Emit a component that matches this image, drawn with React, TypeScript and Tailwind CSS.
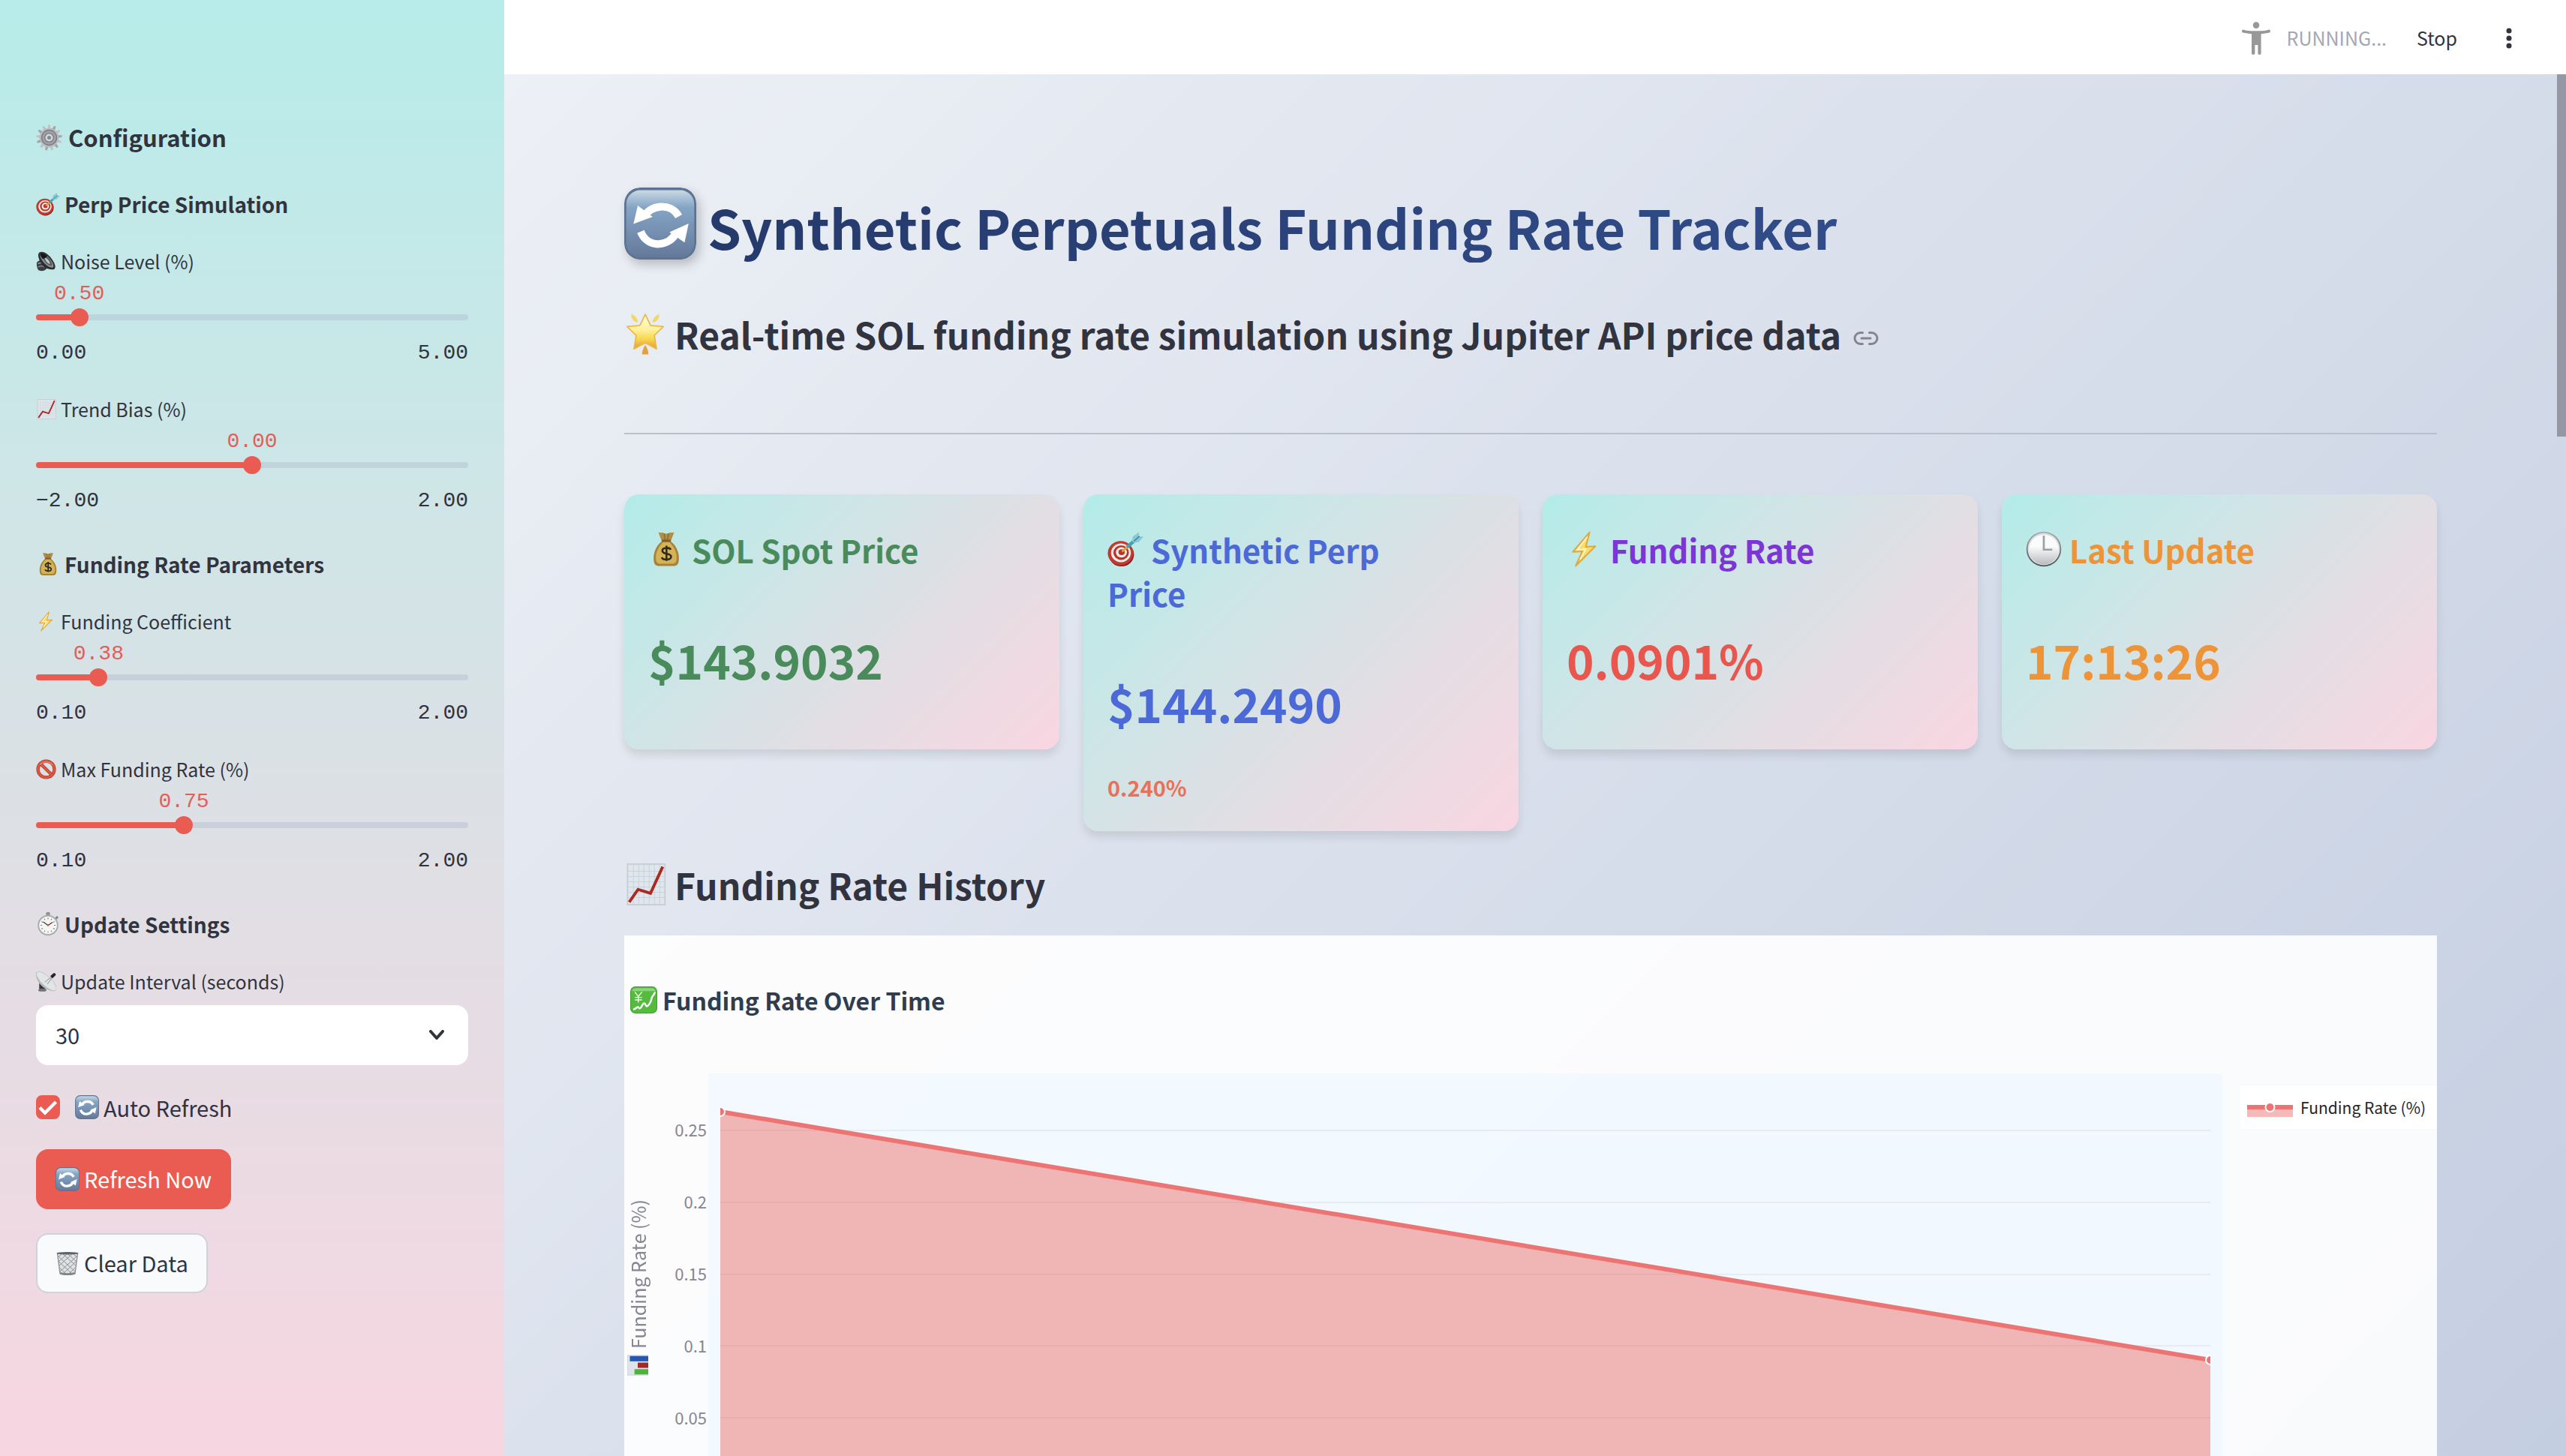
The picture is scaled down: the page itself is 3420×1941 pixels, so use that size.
import { useState, type ReactNode } from "react";
import { Link2 } from "lucide-react";

type IconProps = { className?: string };

function Svg({ className = "", children }: IconProps & { children: ReactNode }) {
  return (
    <svg viewBox="0 0 32 32" aria-hidden="true" className={`shrink-0 ${className}`}>
      {children}
    </svg>
  );
}

function GearIcon({ className }: IconProps) {
  return (
    <Svg className={className}>
      {Array.from({ length: 13 }, (_, i) => (
        <path key={i} d="M14.900 0.300h2.200l1 5.700h-4.200z" fill={i % 2 ? "#a3a5aa" : "#c0c2c6"} transform={`rotate(${(i * 360) / 13} 16 16)`} />
      ))}
      <circle cx="16" cy="16" r="11.600" fill="#b9bbc0" />
      <circle cx="16" cy="16" r="9.800" fill="#7d7f84" />
      <circle cx="16" cy="16" r="8.400" fill="#a0a2a7" />
      <circle cx="16" cy="16" r="6" fill="#808287" />
      <circle cx="16" cy="16" r="4.600" fill="#d6d8db" />
      <circle cx="16" cy="16" r="2.300" fill="#7b8a8c" />
    </Svg>
  );
}

function DartIcon({ className }: IconProps) {
  return (
    <Svg className={className}>
      <ellipse cx="12.400" cy="20.800" rx="11.200" ry="10.600" fill="#7d1f17" />
      <ellipse cx="11.700" cy="19.600" rx="11.400" ry="10.800" fill="#c4392d" />
      <ellipse cx="12" cy="19.300" rx="8.800" ry="8.300" fill="#f3ece8" />
      <ellipse cx="12.200" cy="19.100" rx="6.900" ry="6.500" fill="#b8352b" />
      <ellipse cx="12.400" cy="18.900" rx="4.900" ry="4.600" fill="#f3ece8" />
      <ellipse cx="12.600" cy="18.700" rx="2.800" ry="2.600" fill="#b8352b" />
      <path d="M13 18.300 18.500 13.500" stroke="#d9a63c" strokeWidth="2" />
      <path d="M17.500 14.300 24.500 8" stroke="#4aa0b3" strokeWidth="3" />
      <path d="M22 9.500 22.500 5 28 1 28 4.600 32 5 27.800 9.600 24.200 10.400z" fill="#85c9d6" />
      <path d="M23.500 9 28.500 4.500" stroke="#3b8397" strokeWidth="1" />
    </Svg>
  );
}

function SpeakerIcon({ className }: IconProps) {
  return (
    <Svg className={className}>
      <path d="M1 19c0-3 6-6 9-5l8 12c-3 5-10 6-14 4-2-2-3-7-3-11z" fill="#3a3d41" />
      <path d="M3 20c3-2 6-2 8 0M3.500 25c3-2 7-2 9.500 0" stroke="#9a9ea1" strokeWidth="1.500" fill="none" />
      <path d="M5 2C10-1 18 3 24 11c6 8 8 14 5 17-4 2-12 0-17-4C6 18 1 6 5 2z" fill="#2b2e32" />
      <path d="M7 3.500c5-1 11 3 15 8.500 5 6 6.500 11 5 13.500-4 1-9-2-13-6C9 14.500 4.500 6.500 7 3.500z" fill="#8e9498" />
      <path d="M10 6c5 0 9 3 12 7 3 4.500 4 8 3 10-4 0-7-2-10-5.500C12 14 9 9 10 6z" fill="#565b60" />
      <path d="M14 10c4 1 8 6 8 10-3 0-8-6-8-10z" fill="#c3c8cb" />
      <path d="M7 3.500c4-1 8 1 11 4-2 3-5 3-7 5-3-3-5-7-4-9z" fill="#16181b" />
    </Svg>
  );
}

function ChartUpIcon({ className }: IconProps) {
  return (
    <Svg className={className}>
      <rect x="2.500" y="0.500" width="28.500" height="31" fill="#dfe6ec" stroke="#c5ccd3" />
      {[6, 10, 14, 18, 22, 26].map((v) => (
        <path key={v} d={`M3 ${v}H31M${v + 1} 1V31`} stroke="#c7d1db" strokeWidth="0.500" />
      ))}
      <path d="M3.800 29.500 10.500 19.800 20 22.800 29.300 2.500" fill="none" stroke="#a92a20" strokeWidth="2.200" />
    </Svg>
  );
}

function MoneyBagIcon({ className }: IconProps) {
  return (
    <Svg className={className}>
      <path d="M9 1c2 1 3 0 4 .5 2 1 4 1 6 0 1-.5 2 .5 4-.5l-3 8h-8z" fill="#b18d45" />
      <path d="M12 9h8c6 5 8 12 7 18-.5 3-2 4-5 4H10c-3 0-4.500-1-5-4-1-6 1-13 7-18z" fill="#a9823a" />
      <path d="M13 10h6c5 5 7 11 6 16-.4 2.500-2 3-4 3H11c-2 0-3.600-.5-4-3-1-5 1-11 6-16z" fill="#d3b355" />
      <path d="M12 8.500h8" stroke="#80602a" strokeWidth="1.800" />
      <path d="M14 2l1 6M18 2l-1 6" stroke="#80602a" strokeWidth="0.700" />
      <path d="M20 16.500c-1-2-7.500-2.500-7.500 1 0 3.800 7.800 1.600 7.800 5.200 0 3.600-7.300 3.200-8.300.6M16.200 13v13.500" fill="none" stroke="#2e2a1c" strokeWidth="1.700" />
    </Svg>
  );
}

function BoltIcon({ className }: IconProps) {
  return (
    <Svg className={className}>
      <path d="M20.500 1 5.500 18.500l8.500-.5L8 31 25.500 13.500 17 14z" fill="#f9dc6c" stroke="#dfa941" strokeWidth="1.300" strokeLinejoin="round" />
      <path d="M18.500 5 9.500 16.500 17 16l-5 9" fill="none" stroke="#fff6c4" strokeWidth="1.200" />
    </Svg>
  );
}

function ProhibitedIcon({ className }: IconProps) {
  return (
    <Svg className={className}>
      <circle cx="16" cy="16" r="13" fill="none" stroke="#a33424" strokeWidth="5" />
      <circle cx="16" cy="16" r="13" fill="none" stroke="#da5740" strokeWidth="3.600" />
      <path d="M7 7 25 25" stroke="#a33424" strokeWidth="5" />
      <path d="M6.500 6.500 25.500 25.500" stroke="#da5740" strokeWidth="3.600" />
      <path d="M6 9A13 13 0 0 1 26 9" fill="none" stroke="#f09a86" strokeWidth="1.200" />
    </Svg>
  );
}

function StopwatchIcon({ className }: IconProps) {
  return (
    <Svg className={className}>
      <rect x="13.300" y="0" width="5.400" height="4.500" rx="1.500" fill="#8d9296" />
      <path d="M26 9l3-3" stroke="#7e8488" strokeWidth="3" />
      <circle cx="16" cy="17.500" r="13.800" fill="#a9adb0" />
      <circle cx="16" cy="17.500" r="11.800" fill="#f5f5f4" />
      {Array.from({ length: 12 }, (_, i) => (
        <path key={i} d="M16 7.500v2" stroke="#777" strokeWidth="1" transform={`rotate(${i * 30} 16 17.500)`} />
      ))}
      <path d="M16 17.500 9.500 13M16 17.500l6-4" stroke="#333" strokeWidth="1.100" />
      <circle cx="16" cy="17.500" r="1.200" fill="#b3564c" />
    </Svg>
  );
}

function SatelliteIcon({ className }: IconProps) {
  return (
    <Svg className={className}>
      <path d="M5 19h8l2 9H5z" fill="#34383b" />
      <ellipse cx="10" cy="29.500" rx="6.500" ry="2.300" fill="#6e7376" />
      <path d="M0.500 1C-2 15 12 32 31 30.500z" fill="#b4b7b9" />
      <ellipse cx="16.500" cy="15.500" rx="20.500" ry="7.500" transform="rotate(43 16.500 15.500)" fill="#e3e5e5" stroke="#b5b8b9" strokeWidth="0.800" />
      <path d="M14 17 25 8M18 20l8-11" stroke="#85898b" strokeWidth="1.100" />
      <path d="M22.500 7.500 27.500 3c2-1.200 4.500 1 3.500 3l-5 5z" fill="#24272a" />
    </Svg>
  );
}

function RefreshEmoji({ className }: IconProps) {
  return (
    <Svg className={className}>
      <defs>
        <linearGradient id="refreshFace" x1="0" y1="0" x2="0" y2="1">
          <stop offset="0" stopColor="#c9d8e4" />
          <stop offset="0.250" stopColor="#86a5c6" />
          <stop offset="1" stopColor="#64799a" />
        </linearGradient>
      </defs>
      <rect width="32" height="32" rx="7" fill="#5d7391" />
      <rect x="0.900" y="1.200" width="30.200" height="29.900" rx="6.200" fill="url(#refreshFace)" />
      <path d="M9.200 12.500C11.500 8 20.500 6.300 24.200 12.800" fill="none" stroke="#fff" strokeWidth="3.400" />
      <path d="M4.100 16.200 6 8l6.600 5z" fill="#fff" />
      <path d="M22.800 20.500C20.500 25.500 10.800 28 7.300 19.600" fill="none" stroke="#fff" strokeWidth="3.400" />
      <path d="M28.600 16 26.800 24.400 20.100 19.800z" fill="#fff" />
    </Svg>
  );
}

function TrashIcon({ className }: IconProps) {
  return (
    <Svg className={className}>
      <path d="M2.500 3h27L26 30c-4 2-16 2-20 0z" fill="#dfe1e3" />
      <path
        d="M4 7l22 20M4.500 14 22 30M5.500 22l8 8M10 4l17 15M17 4l11 10M24 4l5 4M28 7 6 27M27 14 10 30M26 22l-8 8M22 4 5 19M15 4 4 14M8 4 3.500 8"
        stroke="#8d9195"
        strokeWidth="1"
      />
      <path d="M2.500 3 6 30c4 2 16 2 20 0L29.500 3" fill="none" stroke="#8a8e92" strokeWidth="1.300" />
      <ellipse cx="16" cy="2.800" rx="14.500" ry="1.700" fill="#5f6468" />
      <path d="M6.200 29c5 2 15 2 19.600 0" fill="none" stroke="#7f8487" strokeWidth="2.400" />
    </Svg>
  );
}

function StarIcon({ className }: IconProps) {
  return (
    <Svg className={className}>
      <defs>
        <linearGradient id="starFace" x1="0" y1="0" x2="0" y2="1">
          <stop offset="0" stopColor="#fffbe0" />
          <stop offset="0.450" stopColor="#fdf19a" />
          <stop offset="0.700" stopColor="#f9d84f" />
          <stop offset="1" stopColor="#e59a35" />
        </linearGradient>
      </defs>
      <path d="M16 1.200 20.100 9.600 29.800 10.500 22.900 17.200 24.600 27.600 16 22.800 7.400 27.600 9.100 17.200 2.200 10.500 11.900 9.600z" fill="url(#starFace)" stroke="#eab94c" strokeWidth="1" strokeLinejoin="round" />
      <path d="M5.500 1c3 1 5 4 5 6.500C7 7 5 4 5.500 1zM26.500 1c-3 1-5 4-5 6.500C25 7 27 4 26.500 1z" fill="#f3d767" />
      <path d="M16 24.500c1.500 2 2.500 5 2.500 7.200h-5c0-2.200 1-5.200 2.500-7.200z" fill="#e5a03d" />
    </Svg>
  );
}

function ClockIcon({ className }: IconProps) {
  return (
    <Svg className={className}>
      <defs>
        <linearGradient id="clockRim" x1="0" y1="0" x2="0" y2="1">
          <stop offset="0" stopColor="#a9aeb2" />
          <stop offset="1" stopColor="#4d5053" />
        </linearGradient>
        <linearGradient id="clockFace" x1="0" y1="0" x2="0" y2="1">
          <stop offset="0.400" stopColor="#fbfbfb" />
          <stop offset="1" stopColor="#b9bcc0" />
        </linearGradient>
      </defs>
      <circle cx="16" cy="16" r="15.500" fill="url(#clockRim)" />
      <circle cx="16" cy="16" r="14.300" fill="#dcdfe1" />
      <circle cx="16" cy="16.400" r="13.200" fill="url(#clockFace)" />
      <path d="M16 4v12.500h7.500" fill="none" stroke="#9da1a5" strokeWidth="1.800" />
    </Svg>
  );
}

function YenChartIcon({ className }: IconProps) {
  return (
    <Svg className={className}>
      <rect width="32" height="32" rx="6" fill="#459f35" />
      <rect x="1" y="1" width="30" height="30" rx="5" fill="#55bb3e" />
      <path d="M2 5.500Q3 2 7 2h18q4 0 5 3.500z" fill="#8cd47b" />
      <path d="M5.500 6.500 9.500 12l4.500-5.500M9.500 12v7M5.500 13h8.500M5.500 16h8.500" fill="none" stroke="#e9f8e3" strokeWidth="1.300" />
      <path d="M4.500 27c2-.5 3-2.500 4.500-2.500 1 0 1 2 2.500 1.500 2-1 3-6 5-6s1.500 3.500 3 3.500 3-2 4.500-5 1-6 2.500-7 2-3 2.500-4" fill="none" stroke="#fff" strokeWidth="2.200" strokeLinecap="round" strokeLinejoin="round" />
    </Svg>
  );
}

function BarChartIcon({ className }: IconProps) {
  return (
    <Svg className={className}>
      <rect x="1" y="0" width="30" height="32" fill="#dde4ea" stroke="#c6cdd4" />
      <rect x="2" y="11" width="8" height="21" fill="#4eb33b" />
      <rect x="12" y="16" width="8" height="16" fill="#a12a22" />
      <rect x="22" y="4" width="8" height="28" fill="#2557b0" />
    </Svg>
  );
}

function PersonIcon() {
  return (
    <svg viewBox="0 0 38 44" className="h-11 w-[38px]" aria-hidden="true" fill="#989898">
      <circle cx="19" cy="4.600" r="4.300" />
      <path d="M2 10.500C7 12.400 13 12.200 19 12.200s12 .2 17-1.700c2.300-.4 2.600 3.300.6 4-4 .9-8 1.300-11 1.700V42c0 2.600-4.200 2.600-4.200 0V31h-4v11c0 2.600-4.400 2.600-4.400 0V16.200c-3-.4-7.600-.8-11.600-1.700-2-.7-1.700-4.400.6-4z" />
    </svg>
  );
}

type SliderProps = { id: string; icon: ReactNode; label: string; min: number; max: number; initial: number };

const fmt = (n: number) => n.toFixed(2).replace("-", "−");

function SliderField({ id, icon, label, min, max, initial }: SliderProps) {
  const [value, setValue] = useState(initial);
  const pct = `${((value - min) / (max - min)) * 100}%`;
  return (
    <div>
      <label htmlFor={id} className="flex items-center gap-[6px] text-[25px] leading-10">
        {icon}
        {label}
      </label>
      <div className="pt-1 font-['Liberation_Mono',monospace] text-[28px] leading-[39px] text-[#e25f57]">
        <div className="flex w-0 justify-center" style={{ marginLeft: pct }}>
          <output htmlFor={id}>{value === 0.375 ? "0.38" : fmt(value)}</output>
        </div>
      </div>
      <div className="grid items-center">
        <div className="col-start-1 row-start-1 h-2 overflow-hidden rounded bg-[#acbacd]/40">
          <div className="h-full bg-[#ea5b51]" style={{ width: pct }} />
        </div>
        <input
          id={id}
          type="range"
          min={min}
          max={max}
          step={0.005}
          value={value}
          onChange={(e) => setValue(Number(e.target.value))}
          className="col-start-1 row-start-1 -mx-3 h-6 w-[calc(100%+24px)] cursor-pointer appearance-none bg-transparent [&::-webkit-slider-thumb]:size-6 [&::-webkit-slider-thumb]:appearance-none [&::-webkit-slider-thumb]:rounded-full [&::-webkit-slider-thumb]:bg-[#ea5b51]"
        />
      </div>
      <div className="mt-[18px] flex justify-between font-['Liberation_Mono',monospace] text-[28px] leading-9">
        <span>{fmt(min)}</span>
        <span>{fmt(max)}</span>
      </div>
    </div>
  );
}

function SidebarHeading({ icon, children }: { icon: ReactNode; children: ReactNode }) {
  return (
    <h3 className="flex items-center gap-[6px] text-[28px] leading-10 font-bold">
      {icon}
      {children}
    </h3>
  );
}

function Sidebar() {
  return (
    <aside className="w-[672px] shrink-0 overflow-hidden bg-linear-to-b from-[#b6ece9] to-[#f7d6e1] px-12 pt-[159px]">
      <h2 className="flex items-center gap-2 text-[31px] leading-12 font-bold">
        <GearIcon className="size-[35px]" />
        Configuration
      </h2>
      <div className="mt-[45px] flex flex-col gap-9">
        <SidebarHeading icon={<DartIcon className="size-8" />}>Perp Price Simulation</SidebarHeading>
        <SliderField id="noise" icon={<SpeakerIcon className="size-[27px]" />} label="Noise Level (%)" min={0} max={5} initial={0.5} />
        <SliderField id="trend" icon={<ChartUpIcon className="size-[27px]" />} label="Trend Bias (%)" min={-2} max={2} initial={0} />
      </div>
      <div className="mt-[46px] flex flex-col gap-9">
        <SidebarHeading icon={<MoneyBagIcon className="size-8" />}>Funding Rate Parameters</SidebarHeading>
        <SliderField id="coefficient" icon={<BoltIcon className="size-[27px]" />} label="Funding Coefficient" min={0.1} max={2} initial={0.375} />
        <SliderField id="maxRate" icon={<ProhibitedIcon className="size-[27px]" />} label="Max Funding Rate (%)" min={0.1} max={2} initial={0.75} />
      </div>
      <div className="mt-[46px] flex flex-col gap-9">
        <SidebarHeading icon={<StopwatchIcon className="size-8" />}>Update Settings</SidebarHeading>
        <div>
          <label htmlFor="interval" className="flex items-center gap-[6px] text-[25px] leading-10">
            <SatelliteIcon className="size-[27px]" />
            Update Interval (seconds)
          </label>
          <div className="mt-3 grid items-center">
            <select id="interval" defaultValue="30" className="col-start-1 row-start-1 h-20 w-full appearance-none rounded-2xl bg-white px-[26px] text-[29px]">
              <option>10</option>
              <option>30</option>
              <option>60</option>
            </select>
            <svg viewBox="0 0 20 14" className="pointer-events-none col-start-1 row-start-1 mr-8 h-[14px] w-5 justify-self-end" aria-hidden="true">
              <path d="M2 2 10 11 18 2" fill="none" stroke="#31333f" strokeWidth="4" strokeLinecap="round" strokeLinejoin="round" />
            </svg>
          </div>
        </div>
        <label className="flex items-center text-[29px] leading-10">
          <span className="mr-5 grid">
            <input type="checkbox" defaultChecked className="peer col-start-1 row-start-1 size-8 appearance-none rounded-lg border-2 border-[#ea5b51] bg-white checked:bg-[#ea5b51]" />
            <svg viewBox="0 0 32 32" className="pointer-events-none col-start-1 row-start-1 size-8 opacity-0 peer-checked:opacity-100" aria-hidden="true">
              <path d="M5 16.500 12 23.500 26.500 9" fill="none" stroke="#fff" strokeWidth="4.500" />
            </svg>
          </span>
          <RefreshEmoji className="mr-[6px] size-8" />
          Auto Refresh
        </label>
        <div className="flex flex-col items-start gap-8 text-[29px]">
          <button type="button" className="flex h-20 items-center gap-[6px] rounded-2xl bg-[#ea5b51] px-[26px] text-white">
            <RefreshEmoji className="size-8" />
            Refresh Now
          </button>
          <button type="button" className="flex h-20 items-center gap-[6px] rounded-2xl border-2 border-[#d2d0d8] bg-[#f9fafc] px-6">
            <TrashIcon className="size-8" />
            Clear Data
          </button>
        </div>
      </div>
    </aside>
  );
}

type CardProps = { icon: ReactNode; title: string; value: string; titleClass: string; valueClass: string; delta?: string };

function MetricCard({ icon, title, value, titleClass, valueClass, delta }: CardProps) {
  return (
    <article className="rounded-[20px] bg-linear-135 from-[#b2ece9] to-[#f9d6e1] px-8 pt-[45px] pb-[33px] shadow-[0_8px_12px_rgba(0,0,0,0.1)]">
      <h3 className={`pr-16 text-[42px] leading-[58px] font-bold ${titleClass}`}>
        {icon}
        {title}
      </h3>
      <p className={`mt-[81px] mb-[51px] text-[62px] leading-[72px] font-bold ${valueClass}`}>{value}</p>
      {delta && <p className="text-[29px] leading-[51px] font-bold text-[#e8715a]">{delta}</p>}
    </article>
  );
}

function FundingChart() {
  return (
    <section className="mt-[34px] bg-white/90">
      <h3 className="flex items-center gap-[7px] pt-[62px] pb-[74px] pl-2 text-[32px] leading-12 font-bold text-[#2f3d4e]">
        <YenChartIcon className="size-9" />
        Funding Rate Over Time
      </h3>
      <div className="grid grid-cols-[112px_1fr_286px]">
        <div className="flex justify-between text-[#858694]">
          <div className="flex w-9 rotate-180 items-center justify-center gap-2 text-[25px] leading-9 [writing-mode:vertical-rl]">
            <BarChartIcon className="h-7 w-7 rotate-90" />
            Funding Rate (%)
          </div>
          <ul className="pt-[26px] pr-[2px] text-right text-[22px] leading-24">
            {["0.25", "0.2", "0.15", "0.1", "0.05"].map((t) => (
              <li key={t}>{t}</li>
            ))}
          </ul>
        </div>
        <div className="bg-[#f0f7ff]/80 px-4">
          <svg viewBox="0 0 1986 570" preserveAspectRatio="none" className="block h-[570px] w-full" role="img" aria-label="Funding Rate (%) over time">
            <path d="M0 51 1986 382V555H0z" fill="#f0b5b5" />
            {[76, 172, 268, 363, 459].map((y) => (
              <path key={y} d={`M0 ${y}H1986`} stroke="#80809a" strokeOpacity="0.100" strokeWidth="2" />
            ))}
            <path d="M0 51 1986 382" stroke="#ec7573" strokeWidth="6" />
            <circle cx="0" cy="51" r="6" fill="#ec7573" stroke="#fff" strokeWidth="2" />
            <circle cx="1986" cy="382" r="6" fill="#ec7573" stroke="#fff" strokeWidth="2" />
          </svg>
        </div>
        <div className="mt-4 ml-6 flex h-[58px] items-center gap-[10px] bg-white pl-[9px] text-[21px] leading-8 whitespace-nowrap text-[#25262c]">
          <svg viewBox="0 0 61 28" className="h-7 w-[61px] shrink-0" aria-hidden="true">
            <rect y="14" width="61" height="13" fill="#f6b9b9" />
            <rect y="11" width="61" height="6" fill="#ec7573" />
            <circle cx="30.500" cy="14" r="6" fill="#ec7573" stroke="#fff" strokeWidth="2" />
          </svg>
          Funding Rate (%)
        </div>
      </div>
    </section>
  );
}

export default function App() {
  return (
    <div className="flex h-screen overflow-hidden bg-linear-135 from-[#f4f6f9] to-[#c4cee1] font-['Noto_Sans_CJK_SC',sans-serif] text-[#31333f]">
      <Sidebar />
      <div className="relative min-w-0 flex-1 overflow-hidden">
        <header className="flex h-[99px] items-center justify-end bg-white pt-[2px] pr-[72px] text-[25px]">
          <PersonIcon />
          <span className="ml-[22px] text-[#a5a7b4]">RUNNING...</span>
          <button type="button" className="ml-10">
            Stop
          </button>
          <button type="button" aria-label="Menu" className="ml-[65px]">
            <svg viewBox="0 0 8 28" className="h-7 w-2" fill="#31333f" aria-hidden="true">
              <circle cx="4" cy="4" r="3.500" />
              <circle cx="4" cy="14" r="3.500" />
              <circle cx="4" cy="24" r="3.500" />
            </svg>
          </button>
        </header>
        <div className="absolute top-[99px] right-0 h-[483px] w-3 bg-[#9498a5]" />
        <main className="pt-[147px] pr-[172px] pl-40">
          <h1 className="flex items-center gap-[15px] text-[72px] leading-24 font-bold">
            <RefreshEmoji className="size-24 rounded-[21px] shadow-[4px_6px_14px_rgba(0,0,0,0.22)]" />
            <span className="flex-1 bg-linear-to-r from-[#253a6b] to-[#38569a] bg-clip-text pt-2 text-transparent">Synthetic Perpetuals Funding Rate Tracker</span>
          </h1>
          <h2 className="mt-[61px] flex items-center gap-[11px] text-[48px] leading-[68px] font-bold">
            <StarIcon className="size-14" />
            Real-time SOL funding rate simulation using Jupiter API price data
            <a href="#real-time" aria-label="Link to this section" className="mt-3 ml-1 text-[#84868f]">
              <Link2 className="size-9" strokeWidth={2} />
            </a>
          </h2>
          <hr className="mt-[98px] border-t-2 border-[#bac0cb]" />
          <div className="mt-20 grid grid-cols-4 items-start gap-8">
            <MetricCard icon={<MoneyBagIcon className="mr-[10px] inline size-12 align-[-5px]" />} title="SOL Spot Price" value="$143.9032" titleClass="text-[#4a8b5c]" valueClass="text-[#4a8b5c]" />
            <MetricCard
              icon={<DartIcon className="mr-[10px] inline size-12 align-[-5px]" />}
              title="Synthetic Perp Price"
              value="$144.2490"
              titleClass="text-[#4c69d8]"
              valueClass="text-[#4c69d8]"
              delta="0.240%"
            />
            <MetricCard icon={<BoltIcon className="mr-[10px] inline size-12 align-[-5px]" />} title="Funding Rate" value="0.0901%" titleClass="text-[#7c35d6]" valueClass="text-[#e9564e]" />
            <MetricCard icon={<ClockIcon className="mr-[10px] inline size-12 align-[-5px]" />} title="Last Update" value="17:13:26" titleClass="text-[#ee9438]" valueClass="text-[#ee9438]" />
          </div>
          <h2 className="mt-[37px] flex items-center gap-[11px] text-[48px] leading-[68px] font-bold">
            <ChartUpIcon className="size-14" />
            Funding Rate History
          </h2>
          <FundingChart />
        </main>
      </div>
    </div>
  );
}
